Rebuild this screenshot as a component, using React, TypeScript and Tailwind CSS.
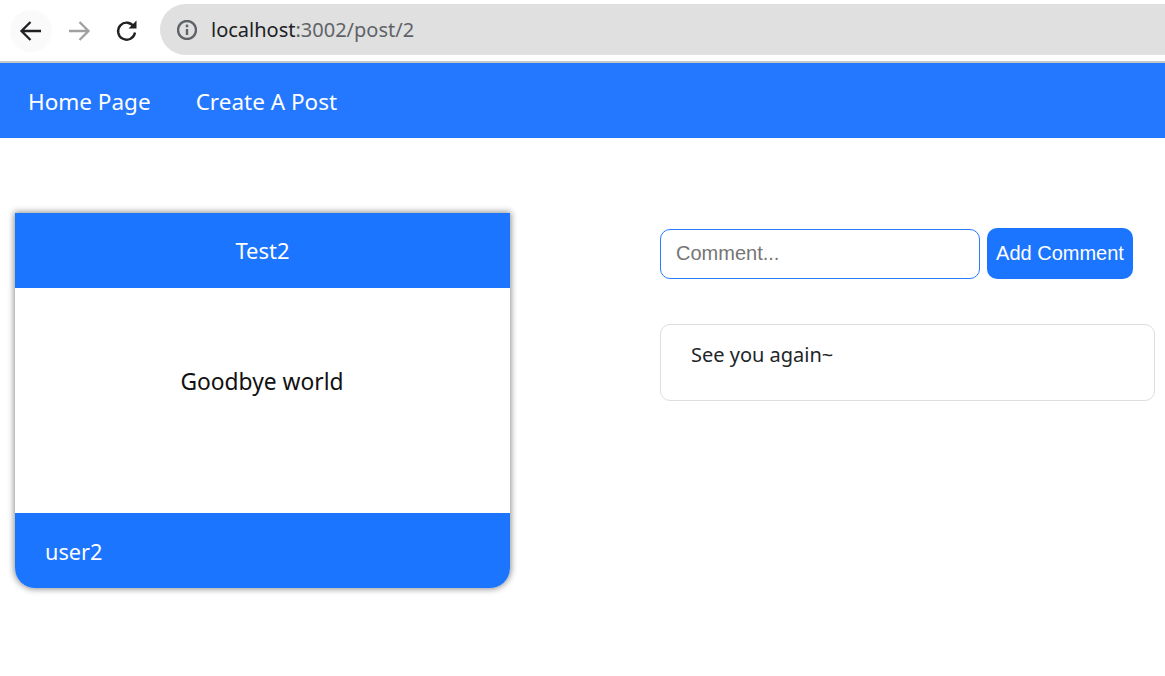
import React from "react";

const uiFont = "font-['Noto_Sans',sans-serif]";

function BrowserBar() {
  return (
    <div className="flex h-[61px] items-center bg-white">
      <div className="ml-[10px] flex h-[42px] w-[42px] items-center justify-center rounded-full bg-[#fafafa]">
        <svg width="24" height="24" viewBox="0 0 24 24" fill="none" stroke="#202124" strokeWidth="2.300">
          <path d="M22 12H3.500M11.500 3l-9 9 9 9" />
        </svg>
      </div>
      <div className="ml-[15px] flex h-[42px] w-[24px] items-center justify-center">
        <svg width="24" height="24" viewBox="0 0 24 24" fill="none" stroke="#a0a0a0" strokeWidth="2.300">
          <path d="M2 12h18.500M12.500 3l9 9-9 9" />
        </svg>
      </div>
      <div className="ml-[24px] flex h-[42px] w-[24px] items-center justify-center">
        <svg width="24" height="24" viewBox="0 0 24 24" fill="none">
          <path d="M19 8A8.500 8.500 0 1 0 20 13.500" stroke="#202124" strokeWidth="2.300" />
          <path d="M21.500 1.500v8h-8z" fill="#202124" />
        </svg>
      </div>
      <div className="mb-[2px] ml-[21px] flex h-[51px] flex-1 items-center rounded-l-full bg-[#e0e0e0] pl-[17px]">
        <svg width="20" height="20" viewBox="0 0 20 20" fill="none">
          <circle cx="10" cy="10" r="9" stroke="#5f6368" strokeWidth="2.400" />
          <path d="M10 9v6" stroke="#5f6368" strokeWidth="2.400" />
          <circle cx="10" cy="6" r="1.400" fill="#5f6368" />
        </svg>
        <span className={`ml-[14px] text-[20px] leading-none text-[#202124] ${uiFont}`}>
          localhost<span className="text-[#5f6368]">:3002/post/2</span>
        </span>
      </div>
    </div>
  );
}

function PostCard() {
  return (
    <div className="w-[495px] overflow-hidden rounded-b-[20px] shadow-[0_0_6px_1px_rgba(0,0,0,0.45)]">
      <div className="flex h-[75px] items-center justify-center bg-[#1c75ff] text-[22px] text-white">Test2</div>
      <div className="flex h-[225px] items-center justify-center bg-white pb-[36px] pr-[1px] text-[22.800px] text-[#111]">Goodbye world</div>
      <div className="flex h-[75px] items-center bg-[#1c75ff] pl-[30px] pt-[3px] text-[21.700px] text-white">user2</div>
    </div>
  );
}

function Comments() {
  return (
    <div className="flex w-[495px] flex-col">
      <div className="flex items-center gap-[7px]">
        <input
          placeholder="Comment..."
          className="h-[50px] w-[320px] rounded-[10px] border border-[#2a7bff] bg-white pl-[15px] font-['Liberation_Sans',sans-serif] text-[20px] outline-none placeholder:text-[#757575]"
        />
        <button className="h-[51px] w-[146px] rounded-[10px] bg-[#1c75ff] pb-[1px] font-['Liberation_Sans',sans-serif] text-[20px] text-white">
          Add Comment
        </button>
      </div>
      <div className="mt-[45px] h-[77px] rounded-[10px] border border-[#dedede] pl-[30px] pt-[15px] text-[20px] leading-[30px] text-[#212529]">
        See you again~
      </div>
    </div>
  );
}

export default function App() {
  return (
    <div className={`h-[676px] w-[1165px] overflow-hidden bg-white ${uiFont}`}>
      <BrowserBar />
      <div className="h-[2px] bg-[#c8c8c8]" />
      <nav className="flex h-[75px] items-center gap-[45px] bg-[#2478ff] pl-[28px] pt-[3px] text-[22.500px] text-white">
        <a>Home Page</a>
        <a>Create A Post</a>
      </nav>
      <main className="flex items-start pl-[15px] pt-[75px]">
        <PostCard />
        <div className="ml-[150px] pt-[15px]">
          <Comments />
        </div>
      </main>
    </div>
  );
}
